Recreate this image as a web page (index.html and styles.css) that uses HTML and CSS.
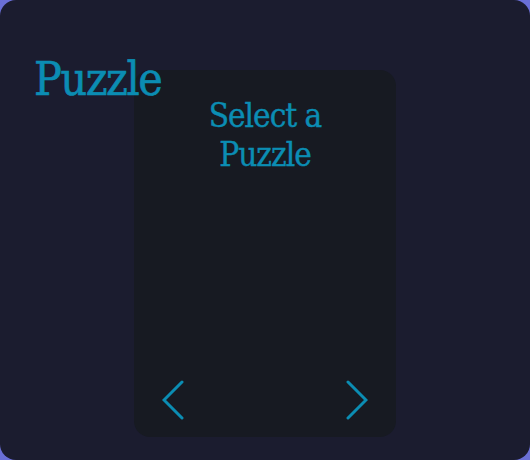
FILE: index.html
```html
<!DOCTYPE html>
<html>
<head>
<meta charset="utf-8">
<link rel="stylesheet" href="styles.css">
</head>
<body>
<div class="app">
  <h1 class="title">Puzzle</h1>
  <div class="card">
    <h2 class="card-title">Select a Puzzle</h2>
    <div class="nav">
      <button class="nav-btn" aria-label="Previous">
        <svg width="22" height="40" viewBox="0 0 22 40"><polyline points="20,2 2,20 20,38" fill="none" stroke="#0b8db3" stroke-width="3" stroke-linecap="round" stroke-linejoin="miter"/></svg>
      </button>
      <button class="nav-btn" aria-label="Next">
        <svg width="22" height="40" viewBox="0 0 22 40"><polyline points="2,2 20,20 2,38" fill="none" stroke="#0b8db3" stroke-width="3" stroke-linecap="round" stroke-linejoin="miter"/></svg>
      </button>
    </div>
  </div>
</div>
</body>
</html>
```
FILE: styles.css
```css
html, body {
  margin: 0;
  padding: 0;
  background: #6a6fd6;
}
.app {
  position: relative;
  width: 530px;
  height: 460px;
  box-sizing: border-box;
  background: #1b1c2f;
  border-radius: 16px;
  padding-top: 70px;
  display: flex;
  flex-direction: column;
  align-items: center;
  font-family: "DejaVu Serif", "Liberation Serif", serif;
  color: #0b8db3;
}
.title {
  position: absolute;
  left: 34px;
  top: 49px;
  margin: 0;
  font-size: 46px;
  font-weight: normal;
  font-stretch: condensed;
  letter-spacing: -1.4px;
  -webkit-text-stroke: 0.6px #0b8db3;
  line-height: 60px;
  z-index: 1;
}
.card {
  width: 262px;
  height: 367px;
  box-sizing: border-box;
  background: #171a22;
  border-radius: 16px;
  display: flex;
  flex-direction: column;
  justify-content: space-between;
  padding: 26px 0 17px;
}
.card-title {
  margin: 0 auto;
  width: 140px;
  text-align: center;
  font-size: 33px;
  font-weight: normal;
  font-stretch: condensed;
  letter-spacing: -1px;
  -webkit-text-stroke: 0.4px #0b8db3;
  line-height: 39px;
}
.nav {
  display: flex;
  justify-content: space-between;
  padding: 0 28px;
}
.nav-btn {
  background: none;
  border: 0;
  padding: 0;
  margin: 0;
  display: flex;
  cursor: pointer;
}
```
